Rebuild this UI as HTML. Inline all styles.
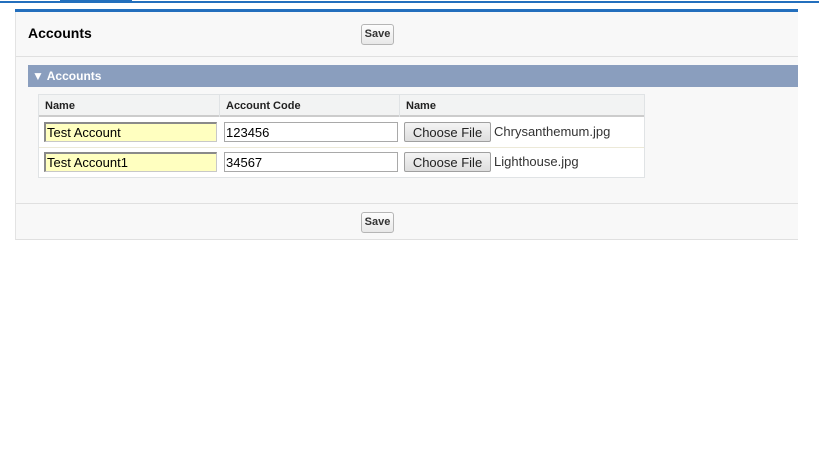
<!DOCTYPE html>
<html><head><style>
body{margin:0;width:819px;height:460px;background:#fff;font-family:"Liberation Sans",Arial,sans-serif;position:relative;overflow:hidden}
div,span,input{position:absolute;box-sizing:border-box}
.btn{background:linear-gradient(#fdfdfd,#e8e8e8);border:1px solid #b5b5b5;border-radius:3px;font-size:11px;font-weight:bold;color:#333;text-align:center;line-height:19px}
.th{font-size:11px;font-weight:bold;color:#222;top:0;height:22px;line-height:22px;padding-left:6px;border-right:1px solid #e0e3e5}
.inp{height:20px;font-size:13px;line-height:18px;padding:0 0 0 1px;color:#000;border:1px solid #a9a9a9;background:#fff;font-family:"Liberation Sans",Arial,sans-serif}
.yel{background:#ffffc0;border-color:#8a8a8a #c8c8c8 #c8c8c8 #8a8a8a;border-width:2px 1px 1px 2px}
.cf{height:20px;width:87px;font-size:13px;line-height:18px;text-align:center;color:#222;border:1px solid #a0a0a0;border-radius:2px;background:linear-gradient(#f4f4f4,#dedede);padding-top:1px}
.fn{font-size:13px;color:#333;line-height:20px}
</style></head><body>
<div style="left:0;top:1px;width:819px;height:2px;background:#236fbd"></div>
<div style="left:60px;top:0;width:72px;height:3px;background:#236fbd"></div>
<div style="left:15px;top:9px;width:783px;height:231px;background:#f8f8f8;border-left:1px solid #e3e3e3;border-bottom:1px solid #e0e0e0"></div>
<div style="left:15px;top:9px;width:783px;height:3px;background:#236fbd"></div>
<div style="left:28px;top:25px;font-size:14px;font-weight:bold;color:#000">Accounts</div>
<div class="btn" style="left:361px;top:24px;width:33px;height:21px">Save</div>
<div style="left:16px;top:56px;width:782px;height:1px;background:#e0e0e0"></div>
<div style="left:28px;top:65px;width:770px;height:22px;background:#8a9ebe"></div>
<div style="left:32px;top:65px;line-height:22px;font-size:12px;font-weight:bold;color:#fff">&#9660; Accounts</div>
<div style="left:38px;top:94px;width:607px;height:84px;background:#fff;border:1px solid #e0e3e5"></div>
<div style="left:39px;top:95px;width:605px;height:22px;background:#f2f3f3;border-bottom:2px solid #ccc"></div>
<div class="th" style="left:39px;top:95px;width:181px">Name</div>
<div class="th" style="left:220px;top:95px;width:180px">Account Code</div>
<div class="th" style="left:400px;top:95px;width:244px;border-right:none">Name</div>
<div style="left:39px;top:147px;width:605px;height:1px;background:#ece9d8"></div>
<input class="inp yel" style="left:44px;top:122px;width:173px" value="Test Account">
<input class="inp" style="left:224px;top:122px;width:174px" value="123456">
<div class="cf" style="left:404px;top:122px">Choose File</div>
<div class="fn" style="left:494px;top:122px">Chrysanthemum.jpg</div>
<input class="inp yel" style="left:44px;top:152px;width:173px" value="Test Account1">
<input class="inp" style="left:224px;top:152px;width:174px" value="34567">
<div class="cf" style="left:404px;top:152px">Choose File</div>
<div class="fn" style="left:494px;top:152px">Lighthouse.jpg</div>
<div style="left:16px;top:203px;width:782px;height:1px;background:#e0e0e0"></div>
<div class="btn" style="left:361px;top:212px;width:33px;height:21px">Save</div>
</body></html>
